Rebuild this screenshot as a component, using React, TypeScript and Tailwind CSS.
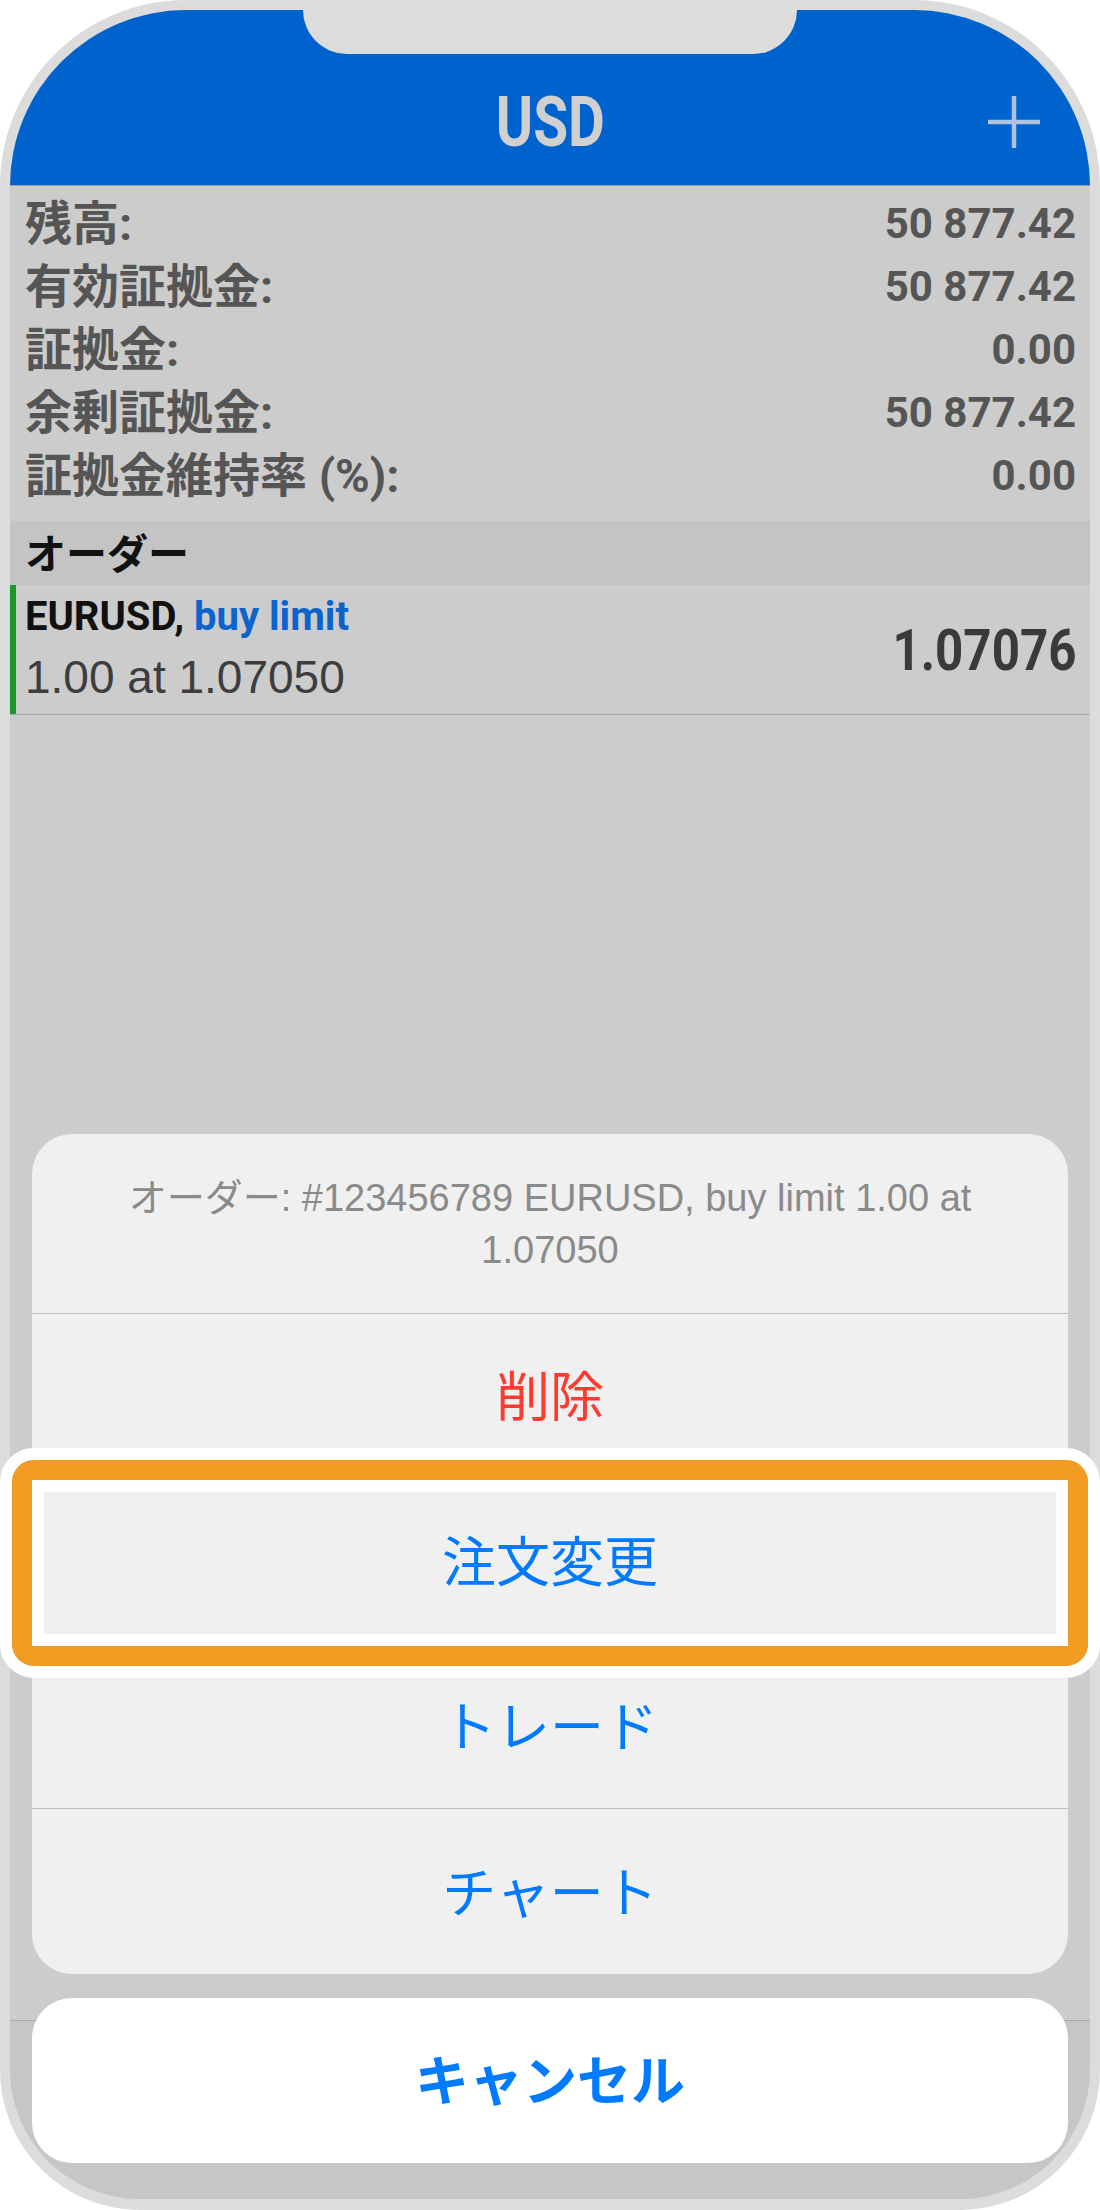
import React from "react";

interface InfoRow {
  label: string;
  value: string;
}

interface SheetAction {
  label: string;
  color: string;
}

const infoRows: InfoRow[] = [
  { label: "残高:", value: "50 877.42" },
  { label: "有効証拠金:", value: "50 877.42" },
  { label: "証拠金:", value: "0.00" },
  { label: "余剰証拠金:", value: "50 877.42" },
  { label: "証拠金維持率 (%):", value: "0.00" },
];

const actions: SheetAction[] = [
  { label: "削除", color: "text-[#ff3b30]" },
  { label: "注文変更", color: "text-[#007aff]" },
  { label: "トレード", color: "text-[#007aff]" },
  { label: "チャート", color: "text-[#007aff]" },
];

const PlusIcon: React.FC = () => (
  <svg width="52" height="52" viewBox="0 0 52 52" fill="none">
    <path d="M26 0v52M0 26h52" stroke="#b0c2e2" strokeWidth="4.5" />
  </svg>
);

const App: React.FC = () => {
  return (
    <div className="relative h-[2210px] w-[1100px] bg-white font-['Liberation_Sans','Noto_Sans_CJK_JP',sans-serif]">
      <div className="h-full rounded-t-[186px] rounded-b-[140px] bg-[#dcdcdc] px-[10px] pt-[10px] pb-[11px]">
        <div className="relative flex h-full flex-col overflow-hidden rounded-t-[176px] rounded-b-[130px] bg-[#cccccc]">
          {/* nav bar */}
          <header className="relative h-[176px] shrink-0 border-b border-[#9c9c9c] bg-[#0062cc] pt-[72px]">
            <div className="absolute left-[293px] top-0 h-[44px] w-[494px] rounded-b-[44px] bg-[#dcdcdc]" />
            <div className="grid h-[80px] grid-cols-[1fr_auto_1fr] items-center">
              <div />
              <span className="inline-block scale-x-[0.81] font-['Roboto',sans-serif] text-[70px] leading-[80px] font-bold text-[#d0d0d0]">
                USD
              </span>
              <div className="flex justify-end pr-[50px]">
                <PlusIcon />
              </div>
            </div>
          </header>

          {/* account summary */}
          <div className="shrink-0 pt-[6px] pr-[14px] pl-[15px] font-['Roboto','Noto_Sans_CJK_JP',sans-serif] font-bold text-[#555555]">
            {infoRows.map((row) => (
              <div key={row.label} className="flex h-[63px] items-center justify-between">
                <span className="text-[47px] leading-[63px]">{row.label}</span>
                <span className="text-[42px] leading-[63px]">{row.value}</span>
              </div>
            ))}
          </div>

          <div className="mt-[14px] flex h-[64px] shrink-0 items-center bg-[#c4c4c4] px-[15px] pb-[5px]">
            <span className="font-['Noto_Sans_CJK_JP',sans-serif] text-[41px] leading-[56px] font-bold text-[#111111]">
              オーダー
            </span>
          </div>

          {/* order row */}
          <div className="flex h-[130px] shrink-0 border-b border-[#ababab]">
            <div className="w-[6px] bg-[#18992a]" />
            <div className="flex flex-1 justify-between pr-[14px] pl-[9px]">
              <div className="flex flex-col pt-[7px]">
                <div className="h-[50px] font-['Roboto',sans-serif] text-[40px] leading-[50px] font-bold">
                  <span className="text-[#111111]">EURUSD, </span>
                  <span className="text-[#0a64cc]">buy limit</span>
                </div>
                <div className="mt-[10px] h-[50px] text-[46px] leading-[50px] text-[#3d3d3f]">1.00 at 1.07050</div>
              </div>
              <div className="flex items-center">
                <span className="inline-block origin-right scale-x-[0.85] font-['Roboto',sans-serif] text-[58px] leading-[64px] font-bold text-[#3a3a3c]">
                  1.07076
                </span>
              </div>
            </div>
          </div>

          <div className="flex-1" />

          {/* tab bar (dimmed) */}
          <div className="h-[179px] shrink-0 border-t border-[#a8a8a8] bg-[#c6c6c6]" />

          {/* action sheet */}
          <div className="absolute right-[22px] bottom-[36px] left-[22px] flex flex-col gap-[24px]">
            <div className="overflow-hidden rounded-[40px] bg-[#f0f0f0]">
              <div className="flex h-[180px] items-center justify-center border-b border-[#bdbdbd] px-[80px] text-center text-[38px] leading-[52px] text-[#8a8a8a]">
                オーダー: #123456789 EURUSD, buy limit 1.00 at 1.07050
              </div>
              {actions.map((a, i) => (
                <div
                  key={a.label}
                  className={`flex h-[165px] items-center justify-center pb-[5px] font-['Noto_Sans_CJK_JP',sans-serif] text-[54px] ${a.color} ${
                    i < actions.length - 1 ? "border-b border-[#bdbdbd]" : ""
                  }`}
                >
                  {a.label}
                </div>
              ))}
            </div>
            <div className="flex h-[165px] items-center justify-center rounded-[40px] bg-white pb-[6px] font-['Noto_Sans_CJK_JP',sans-serif] text-[54px] font-bold text-[#007aff]">
              キャンセル
            </div>
          </div>
        </div>
      </div>

      {/* highlight around 注文変更 */}
      <div className="pointer-events-none absolute top-[1448px] left-0 h-[230px] w-[1100px] rounded-[34px] border-[12px] border-white">
        <div className="h-full rounded-[22px] border-[20px] border-[#f39c23]">
          <div className="h-full border-[12px] border-white" />
        </div>
      </div>
    </div>
  );
};

export default App;
